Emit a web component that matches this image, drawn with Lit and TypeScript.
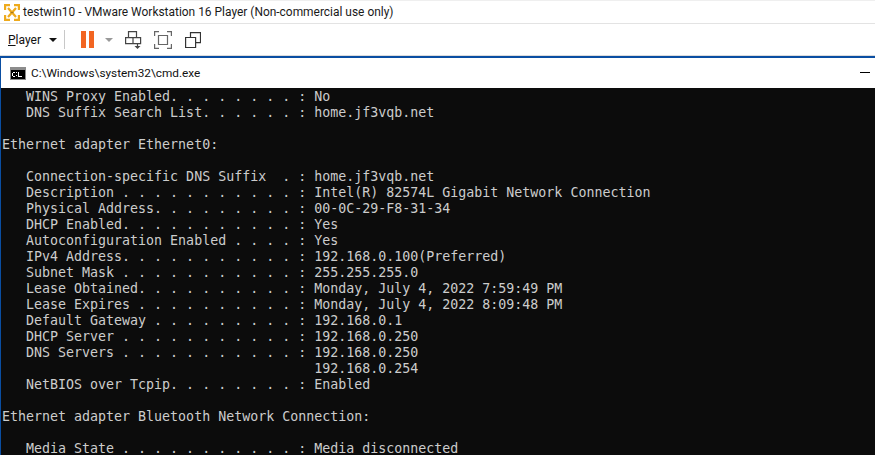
import { LitElement, html, css } from "lit";
import { customElement } from "lit/decorators.js";

const LINES = [
  "   WINS Proxy Enabled. . . . . . . . : No",
  "   DNS Suffix Search List. . . . . . : home.jf3vqb.net",
  "",
  "Ethernet adapter Ethernet0:",
  "",
  "   Connection-specific DNS Suffix  . : home.jf3vqb.net",
  "   Description . . . . . . . . . . . : Intel(R) 82574L Gigabit Network Connection",
  "   Physical Address. . . . . . . . . : 00-0C-29-F8-31-34",
  "   DHCP Enabled. . . . . . . . . . . : Yes",
  "   Autoconfiguration Enabled . . . . : Yes",
  "   IPv4 Address. . . . . . . . . . . : 192.168.0.100(Preferred)",
  "   Subnet Mask . . . . . . . . . . . : 255.255.255.0",
  "   Lease Obtained. . . . . . . . . . : Monday, July 4, 2022 7:59:49 PM",
  "   Lease Expires . . . . . . . . . . : Monday, July 4, 2022 8:09:48 PM",
  "   Default Gateway . . . . . . . . . : 192.168.0.1",
  "   DHCP Server . . . . . . . . . . . : 192.168.0.250",
  "   DNS Servers . . . . . . . . . . . : 192.168.0.250",
  "                                       192.168.0.254",
  "   NetBIOS over Tcpip. . . . . . . . : Enabled",
  "",
  "Ethernet adapter Bluetooth Network Connection:",
  "",
  "   Media State . . . . . . . . . . . : Media disconnected",
];

@customElement("app-root")
export class AppRoot extends LitElement {
  static styles = css`
    :host { display: block; width: 875px; height: 455px; overflow: hidden; background: #fff; font-family: Roboto, "Open Sans", sans-serif; }
    .title { display: flex; align-items: center; gap: 3px; padding-left: 4px; border-top: 1px solid #efefef; border-bottom: 1px solid #e3e3e3; box-sizing: border-box; height: 24px; font-size: 11.94px; color: #1a1a1a; white-space: nowrap; }
    .title svg { flex: none; }
    .toolbar { height: 31px; display: flex; align-items: center; padding-left: 8px; font-size: 12px; color: #111; border-bottom: 1px solid #dcdcdc; box-sizing: content-box; }
    .player { width: 41px; }
    .player u { text-underline-offset: 1px; }
    .caret { width: 0; height: 0; border: 4px solid transparent; border-top: 4px solid #111; border-bottom: 0; margin-top: 1px; }
    .sep { width: 1px; height: 19px; background: #c8c8c8; margin: 0 16px 0 7px; }
    .pause { display: flex; gap: 3.5px; }
    .pause i { display: block; width: 4.5px; height: 17px; background: #f26522; }
    .caret.gray { border-top-color: #999; margin: 0 12px 0 11.5px; }
    .icon1 { margin-right: 12px; }
    .icon2 { margin-right: 13px; }
    .toolbar svg { display: block; flex: none; }
    .window { border-top: 2px solid #0a4ea2; border-left: 1px solid #0a4ea2; }
    .caption { height: 30px; display: flex; align-items: center; padding-left: 9px; gap: 5px; font-size: 11.8px; color: #111; position: relative; }
    .min { position: absolute; right: 5px; top: 14px; width: 10px; height: 1px; background: #000; }
    .console { background: #0c0c0c; color: #cccccc; font-family: "DejaVu Sans Mono", monospace; font-size: 13.3px; line-height: 16px; padding: 1px 0 0 1px; height: 400px; white-space: pre; }
    .console div { height: 16px; }
  `;
  render() {
    return html`
      <div class="title">
        <svg width="16" height="17" viewBox="0 0 16 17" fill="none"><path d="M1 6V1h5M10 1h5v5M1 11v5h5M15 11v5h-5" stroke="#eeaa1c" stroke-width="2.400"/><path d="M4 4l8 9M12 4l-8 9" stroke="#eeaa1c" stroke-width="2.200"/><path d="M6.500 8.500h3" stroke="#a9781a" stroke-width="1.200"/></svg>
        <span>testwin10 - VMware Workstation 16 Player (Non-commercial use only)</span>
      </div>
      <div class="toolbar">
        <span class="player"><u>P</u>layer</span><span class="caret"></span><span class="sep"></span>
        <span class="pause"><i></i><i></i></span><span class="caret gray"></span>
        <svg class="icon1" width="17" height="18" viewBox="0 0 17 18" fill="none" stroke="#444" stroke-width="1.200"><path d="M3.500 .6h8v6h-8zM.6 6.600h15v6H.6zM8 6.600v6"/><path d="M12.500 13v3" /><path d="M9.500 15h6l-3 3z" fill="#444" stroke="none"/></svg>
        <svg class="icon2" width="18" height="18" viewBox="0 0 18 18" fill="none" stroke="#666" stroke-width="1.200"><path d="M.6 5V.6H5M13 .6h4.400V5M.6 13v4.400H5M13 17.400h4.400V13"/><path d="M4.500 4.500h9v9h-9z"/></svg>
        <svg width="16" height="16" viewBox="0 0 16 16" fill="none" stroke="#333" stroke-width="1.200"><path d="M.6 5.500h10v10H.6zM5.500 5V.6h10v10H11"/></svg>
      </div>
      <div class="window">
        <div class="caption">
          <svg width="16" height="13" viewBox="0 0 16 13"><rect width="16" height="13" fill="#8c8c8c"/><rect x="1" y="3" width="14" height="9" fill="#000"/><path d="M3 5h2v1H3zM3 9h2v1H3zM2 6h1v3H2zM6 5h1v1H6zM6 8h1v1H6zM8 5h1v5H8zM9 9h3v1H9z" fill="#fff"/></svg>
          <span>C:\\Windows\\system32\\cmd.exe</span>
          <span class="min"></span>
        </div>
        <div class="console">${LINES.map((l) => html`<div>${l}</div>`)}</div>
      </div>
    `;
  }
}
